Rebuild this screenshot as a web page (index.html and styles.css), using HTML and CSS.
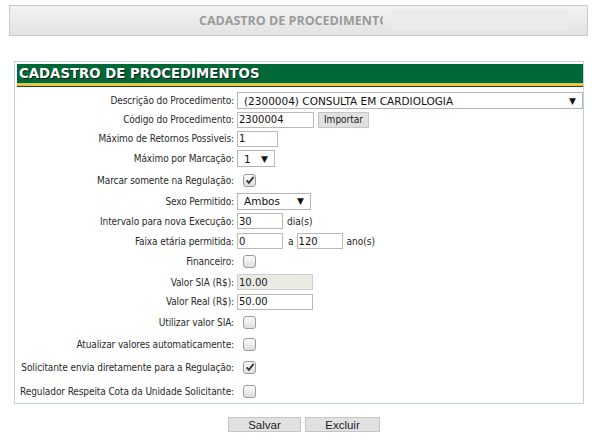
FILE: index.html
```html
<!DOCTYPE html>
<html lang="pt-BR">
<head>
<meta charset="utf-8">
<title>Cadastro de Procedimentos</title>
<link rel="stylesheet" href="styles.css">
</head>
<body>
<div class="topbar">
  <span class="topbar-title">CADASTRO DE PROCEDIMENTOS</span>
  <span class="topbar-mask"></span>
</div>

<div class="panel">
  <div class="panel-title">CADASTRO DE PROCEDIMENTOS</div>
  <div class="panel-rule"></div>

  <div class="form">
    <div class="row h19">
      <label class="lbl">Descrição do Procedimento:</label>
      <div class="fld"><div class="sel w-desc"><span>(2300004) CONSULTA EM CARDIOLOGIA</span><span class="arr">▼</span></div></div>
    </div>
    <div class="row h19">
      <label class="lbl">Código do Procedimento:</label>
      <div class="fld"><input class="txt w-cod" value="2300004"><button class="btn btn-imp">Importar</button></div>
    </div>
    <div class="row h19">
      <label class="lbl">Máximo de Retornos Possiveis:</label>
      <div class="fld"><input class="txt w-ret" value="1"></div>
    </div>
    <div class="row h21">
      <label class="lbl">Máximo por Marcação:</label>
      <div class="fld"><div class="sel w-max"><span>1</span><span class="arr">▼</span></div></div>
    </div>
    <div class="row h22">
      <label class="lbl">Marcar somente na Regulação:</label>
      <div class="fld"><span class="chk on"><svg viewBox="0 0 10 10" width="10" height="10"><path d="M1.6 5.4 L3.9 7.8 L8.6 1.8" fill="none" stroke="#3a3a3a" stroke-width="1.9"/></svg></span></div>
    </div>
    <div class="row h20">
      <label class="lbl">Sexo Permitido:</label>
      <div class="fld"><div class="sel w-sexo"><span>Ambos</span><span class="arr">▼</span></div></div>
    </div>
    <div class="row h20">
      <label class="lbl">Intervalo para nova Execução:</label>
      <div class="fld"><input class="txt w-num" value="30"><span class="unit">dia(s)</span></div>
    </div>
    <div class="row h20">
      <label class="lbl">Faixa etária permitida:</label>
      <div class="fld"><input class="txt w-num" value="0"><span class="unit unit-a">a</span><input class="txt w-num" value="120"><span class="unit">ano(s)</span></div>
    </div>
    <div class="row h21">
      <label class="lbl">Financeiro:</label>
      <div class="fld"><span class="chk"></span></div>
    </div>
    <div class="row h20">
      <label class="lbl">Valor SIA (R$):</label>
      <div class="fld"><input class="txt w-val dis" value="10.00" disabled></div>
    </div>
    <div class="row h19">
      <label class="lbl">Valor Real (R$):</label>
      <div class="fld"><input class="txt w-val" value="50.00"></div>
    </div>
    <div class="row h22">
      <label class="lbl">Utilizar valor SIA:</label>
      <div class="fld"><span class="chk"></span></div>
    </div>
    <div class="row h22">
      <label class="lbl">Atualizar valores automaticamente:</label>
      <div class="fld"><span class="chk"></span></div>
    </div>
    <div class="row h24">
      <label class="lbl">Solicitante envia diretamente para a Regulação:</label>
      <div class="fld"><span class="chk on"><svg viewBox="0 0 10 10" width="10" height="10"><path d="M1.6 5.4 L3.9 7.8 L8.6 1.8" fill="none" stroke="#3a3a3a" stroke-width="1.9"/></svg></span></div>
    </div>
    <div class="row h24">
      <label class="lbl">Regulador Respeita Cota da Unidade Solicitante:</label>
      <div class="fld"><span class="chk"></span></div>
    </div>
  </div>
</div>

<div class="actions">
  <button class="btn btn-act btn-salvar">Salvar</button>
  <button class="btn btn-act btn-excluir">Excluir</button>
</div>
</body>
</html>
```

FILE: styles.css
```css
* { box-sizing: border-box; }

body {
  margin: 0;
  background: #ffffff;
  font-family: "DejaVu Sans Condensed", "DejaVu Sans", sans-serif;
  font-size: 10px;
  color: #222;
}

.topbar {
  margin: 5px 0 0 9px;
  width: 579px;
  height: 31px;
  border: 1px solid #c9c9c9;
  background: linear-gradient(#f3f3f3, #e3e3e3);
  display: flex;
  align-items: center;
  padding-left: 189px;
}

.topbar-title {
  font-family: "Open Sans", "Liberation Sans", sans-serif;
  font-weight: 700;
  font-size: 12.5px;
  color: #9a9a9a;
  width: 184px;
  overflow: hidden;
  white-space: nowrap;
}

.topbar-mask {
  margin-left: 9px;
  width: 176px;
  height: 21px;
  background: #ebebeb;
}

.panel {
  margin: 25px 0 0 14px;
  width: 570px;
  border: 1px solid #c6d1d9;
  padding: 2px 0 0 2px;
}

.panel-title {
  height: 19px;
  background: #006837;
  color: #ffffff;
  font-family: "DejaVu Sans", sans-serif;
  font-weight: 700;
  font-size: 13.3px;
  line-height: 19px;
  padding-left: 2px;
  text-shadow: 1px 1px 0 #0b1f10;
}

.panel-rule {
  height: 4px;
  background: linear-gradient(#bcd25a 0, #bcd25a 1px, #ffd24a 1px, #f3a32a 3px, #00582c 3px, #00582c 4px);
}

.form {
  margin-top: 4px;
}

.row {
  display: flex;
  align-items: center;
}
.h19 { height: 19px; }
.h20 { height: 20px; }
.h21 { height: 21px; }
.h22 { height: 22px; }
.h24 { height: 24px; }

.lbl {
  width: 217px;
  text-align: right;
  white-space: nowrap;
  color: #2a2a2a;
  letter-spacing: -0.1px;
}

.fld {
  margin-left: 3px;
  display: flex;
  align-items: center;
}

.txt {
  height: 16px;
  border: 1px solid #b9b9b9;
  background: #fff;
  font-family: "DejaVu Sans", sans-serif;
  font-size: 10px;
  color: #111;
  padding: 0 1px;
  margin: 0;
  outline: none;
}
.txt.dis {
  background: #ebebe4;
  border-color: #cfcfcf;
  color: #222;
}

.w-cod { width: 77px; }
.w-ret { width: 41px; }
.w-num { width: 46px; }
.w-val { width: 76px; }

.sel {
  height: 17px;
  border: 1px solid #b5b5b5;
  background: #fff;
  display: flex;
  align-items: center;
  justify-content: space-between;
  font-family: "DejaVu Sans", sans-serif;
  font-size: 10.5px;
  color: #111;
  padding: 0 6px 0 6px;
}
.arr {
  font-size: 9px;
  color: #111;
}
.w-desc { width: 346px; }
.w-max { width: 38px; height: 17px; }
.w-sexo { width: 74px; }

.unit {
  margin-left: 4px;
  color: #222;
}
.unit-a {
  margin: 0 3px 0 5px;
}

.chk {
  margin-left: 6px;
  width: 13px;
  height: 13px;
  border: 1px solid #9c9c9c;
  border-radius: 3px;
  background: linear-gradient(#fbfbfb, #dedede);
  display: flex;
  align-items: center;
  justify-content: center;
}

.btn {
  font-family: "Liberation Sans", Arial, sans-serif;
  font-size: 11px;
  color: #222;
  background: #e1e1e1;
  border: 1px solid #c6c6c6;
  padding: 0;
  margin: 0;
}
.btn-imp {
  margin-left: 4px;
  width: 51px;
  height: 16px;
  font-family: "DejaVu Sans Condensed", "DejaVu Sans", sans-serif;
  font-size: 10px;
}

.actions {
  margin: 13px 0 0 228px;
  display: flex;
  gap: 4px;
}
.btn-act {
  height: 15px;
  font-size: 11.5px;
}
.btn-salvar { width: 73px; }
.btn-excluir { width: 75px; }
```
